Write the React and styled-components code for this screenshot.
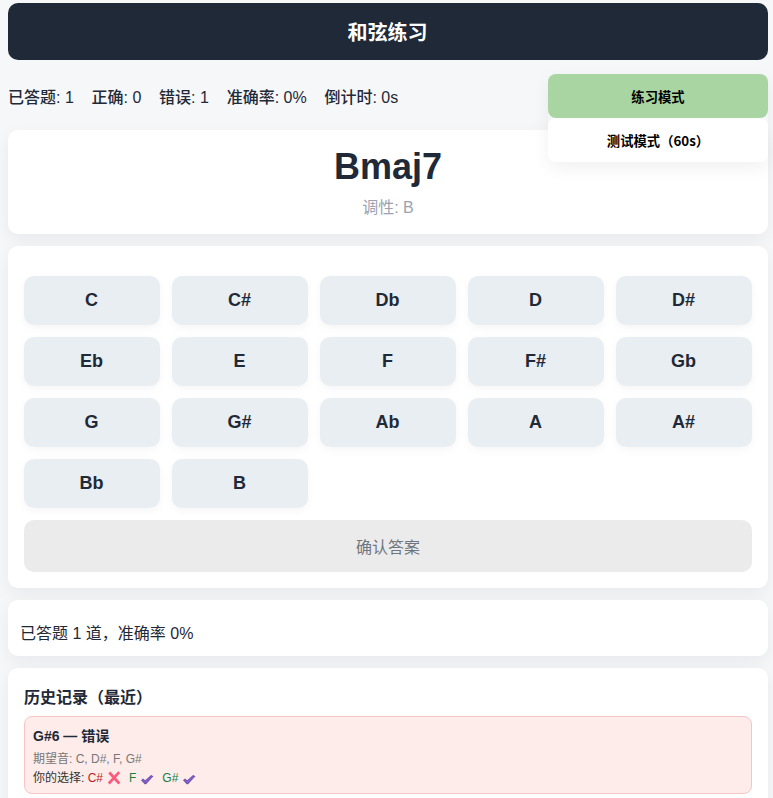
import React from "react";
import styled, { createGlobalStyle } from "styled-components";

const GlobalStyle = createGlobalStyle`
  *, *::before, *::after { box-sizing: border-box; }
  html { height: 100%; overflow: hidden; background: #f5f7f9; }
  body {
    margin: 0;
    height: 100%;
    overflow: hidden;
    color: #1f2937;
    font: 16px/24px "Liberation Sans", "Noto Sans CJK SC", sans-serif;
  }
  button { font-family: inherit; border: 0; margin: 0; }
`;

const Page = styled.main`
  display: flex;
  flex-direction: column;
  width: 100%;
  height: 100vh;
  overflow: hidden;
  padding: 3px 5px 0 8px;

  & > * { flex-shrink: 0; }
`;

const Header = styled.header`
  display: flex;
  align-items: center;
  justify-content: center;
  height: 57px;
  padding: 2px 1px 0 0;
  border-radius: 10px;
  background: #1f2937;
  color: #fff;
  font-size: 20px;
  font-weight: 700;
`;

const StatusBar = styled.section`
  position: relative;
  z-index: 1;
  display: flex;
  align-items: center;
  gap: 17.75px;
  height: 70px;
  padding-top: 6px;
  font-weight: 500;
  white-space: nowrap;
`;

const ModeMenu = styled.div`
  position: absolute;
  top: 14px;
  right: 0;
  display: flex;
  flex-direction: column;
  width: 220px;
  border-radius: 8px;
  box-shadow: 0 6px 18px rgba(0, 0, 0, 0.06);
`;

const ModeButton = styled.button`
  height: 44px;
  padding: 0;
  border-radius: 8px;
  background: ${({ $active }) => ($active ? "#a8d5a2" : "#fff")};
  color: #000;
  font: 700 13.333px "Noto Sans CJK SC", sans-serif;
`;

const Card = styled.section`
  border-radius: 10px;
  background: #fff;
  box-shadow: 0 6px 18px rgba(15, 15, 40, 0.06);
  margin-bottom: 12px;
`;

const ChordCard = styled(Card)`
  display: flex;
  flex-direction: column;
  align-items: center;
  height: 104px;
  padding-top: 15px;
`;

const ChordName = styled.h1`
  margin: 0;
  font-size: 36px;
  line-height: 43px;
  font-weight: 700;
`;

const ChordKey = styled.div`
  margin-top: 8px;
  color: #9ca3af;
`;

const AnswerCard = styled(Card)`
  padding: 30px 16px 16px;
`;

const NoteGrid = styled.div`
  display: grid;
  grid-template-columns: repeat(5, 1fr);
  grid-auto-rows: 49px;
  gap: 12px;
`;

const NoteButton = styled.button`
  padding: 0 1px 0 0;
  border-radius: 10px;
  background: #e8eef2;
  box-shadow: 0 3px 8px rgba(0, 0, 0, 0.04);
  color: #1f2937;
  font-size: 18px;
  font-weight: 700;
`;

const ConfirmButton = styled.button`
  display: block;
  width: 100%;
  height: 52px;
  margin-top: 12px;
  padding: 0;
  border-radius: 10px;
  background: #ebebeb;
  color: #6f767f;
  font-size: 16px;
`;

const SummaryCard = styled(Card)`
  height: 56px;
  padding: 22px 12px 0;
`;

const HistoryCard = styled(Card)`
  height: 180px;
  padding: 18px 16px;
`;

const HistoryTitle = styled.h2`
  margin: 0 0 6px;
  font-size: 16px;
  line-height: 24px;
`;

const HistoryItem = styled.article`
  height: 78px;
  padding: 8px;
  border: 1px solid #f5c6c3;
  border-radius: 8px;
  background: #fdecea;
`;

const ItemTitle = styled.div`
  font-size: 14px;
  line-height: 22px;
  font-weight: 700;
`;

const ItemLine = styled.div`
  display: flex;
  align-items: center;
  height: 19px;
  margin-top: ${({ $muted }) => ($muted ? "2px" : "0")};
  color: ${({ $muted }) => ($muted ? "#777" : "#333")};
  font-size: 12px;
  white-space: pre;
`;

const Choice = styled.span`
  display: flex;
  align-items: center;
  gap: 4px;
  margin-right: 8px;
  color: ${({ $correct }) => ($correct ? "#15803d" : "#b91c1c")};
`;

const Mark = styled.svg`
  display: block;
  width: 14px;
  height: 14px;
`;

function CheckMark() {
  return (
    <Mark viewBox="0 0 14 14">
      <path d="M1 9.2 3 7.4l2.2 1.8 5.9-5.1L13.4 5.3 6 13.2H4.8z" fill="#6a4daa" />
      <path d="m1.8 8.8 1.2-.6 2.2 2.1 6-5.2 1 .6-6.8 6.5z" fill="#8664c9" />
    </Mark>
  );
}

function CrossMark() {
  return (
    <Mark viewBox="0 0 14 14">
      <path d="m2.3 1.5 10 11M12.2 1.2 1.8 12.5" fill="none" stroke="#fb5a7c" strokeWidth="2.7" />
    </Mark>
  );
}

const stats = [
  ["已答题", "1"],
  ["正确", "0"],
  ["错误", "1"],
  ["准确率", "0%"],
  ["倒计时", "0s"],
];
const notes = ["C", "C#", "Db", "D", "D#", "Eb", "E", "F", "F#", "Gb", "G", "G#", "Ab", "A", "A#", "Bb", "B"];
const choices = [
  { note: "C#", correct: false },
  { note: "F", correct: true },
  { note: "G#", correct: true },
];

export default function App() {
  return (
    <>
      <GlobalStyle />
      <Page>
        <Header>和弦练习</Header>
        <StatusBar>
          {stats.map(([label, value]) => (
            <span key={label}>{`${label}: ${value}`}</span>
          ))}
          <ModeMenu>
            <ModeButton $active>练习模式</ModeButton>
            <ModeButton>测试模式（60s）</ModeButton>
          </ModeMenu>
        </StatusBar>
        <ChordCard>
          <ChordName>Bmaj7</ChordName>
          <ChordKey>调性: B</ChordKey>
        </ChordCard>
        <AnswerCard>
          <NoteGrid>
            {notes.map((note) => (
              <NoteButton key={note}>{note}</NoteButton>
            ))}
          </NoteGrid>
          <ConfirmButton disabled>确认答案</ConfirmButton>
        </AnswerCard>
        <SummaryCard>已答题 1 道，准确率 0%</SummaryCard>
        <HistoryCard>
          <HistoryTitle>历史记录（最近）</HistoryTitle>
          <HistoryItem>
            <ItemTitle>G#6 — 错误</ItemTitle>
            <ItemLine $muted>期望音: C, D#, F, G#</ItemLine>
            <ItemLine>
              {"你的选择: "}
              {choices.map(({ note, correct }) => (
                <Choice key={note} $correct={correct}>
                  {note}
                  {correct ? <CheckMark /> : <CrossMark />}
                </Choice>
              ))}
            </ItemLine>
          </HistoryItem>
        </HistoryCard>
      </Page>
    </>
  );
}
